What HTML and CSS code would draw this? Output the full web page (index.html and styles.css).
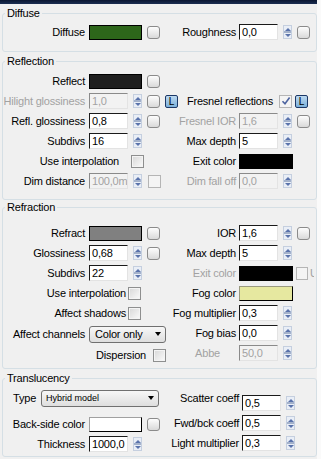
FILE: index.html
```html
<!DOCTYPE html>
<html lang="en">
<head>
    <meta charset="UTF-8">
    <title>Material parameters</title>
    <link rel="stylesheet" href="styles.css">
</head>
<body>
    <div class="panel">
        <div class="titlebar"></div>

        <fieldset class="group diffuse">
            <legend>Diffuse</legend>
            <div class="cols">
                <div class="col left">
                    <div class="row">
                        <span class="lbl">Diffuse</span>
                        <span class="swatch green"></span>
                        <span class="map"></span>
                    </div>
                </div>
                <div class="col right">
                    <div class="row">
                        <span class="lbl">Roughness</span>
                        <span class="num">0,0</span>
                        <span class="spin"></span>
                        <span class="map"></span>
                    </div>
                </div>
            </div>
        </fieldset>

        <fieldset class="group reflection">
            <legend>Reflection</legend>
            <div class="cols">
                <div class="col left">
                    <div class="row">
                        <span class="lbl">Reflect</span>
                        <span class="swatch dark"></span>
                        <span class="map"></span>
                    </div>
                    <div class="row">
                        <span class="lbl off">Hilight glossiness</span>
                        <span class="num off">1,0</span>
                        <span class="spin"></span>
                        <span class="map"></span>
                        <span class="lbtn">L</span>
                    </div>
                    <div class="row">
                        <span class="lbl">Refl. glossiness</span>
                        <span class="num">0,8</span>
                        <span class="spin"></span>
                        <span class="map"></span>
                    </div>
                    <div class="row">
                        <span class="lbl">Subdivs</span>
                        <span class="num">16</span>
                        <span class="spin"></span>
                    </div>
                    <div class="row">
                        <span class="lbl wide-a">Use interpolation</span>
                        <span class="cb"></span>
                    </div>
                    <div class="row">
                        <span class="lbl">Dim distance</span>
                        <span class="num off">100,0m</span>
                        <span class="spin"></span>
                        <span class="cb off gap"></span>
                    </div>
                </div>
                <div class="col right">
                    <div class="row"></div>
                    <div class="row end">
                        <span class="lbl auto">Fresnel reflections</span>
                        <span class="cb off checked">
                            <svg width="10" height="10" viewBox="0 0 10 10"><path d="M1.5 5.2 L4 7.8 L8.6 1.6" fill="none" stroke="#4d64a0" stroke-width="1.6"/></svg>
                        </span>
                        <span class="lbtn">L</span>
                    </div>
                    <div class="row">
                        <span class="lbl off">Fresnel IOR</span>
                        <span class="num off">1,6</span>
                        <span class="spin"></span>
                        <span class="map"></span>
                    </div>
                    <div class="row">
                        <span class="lbl">Max depth</span>
                        <span class="num">5</span>
                        <span class="spin"></span>
                    </div>
                    <div class="row">
                        <span class="lbl">Exit color</span>
                        <span class="swatch black"></span>
                    </div>
                    <div class="row">
                        <span class="lbl off">Dim fall off</span>
                        <span class="num off">0,0</span>
                        <span class="spin"></span>
                    </div>
                </div>
            </div>
        </fieldset>

        <fieldset class="group refraction">
            <legend>Refraction</legend>
            <div class="cols">
                <div class="col left">
                    <div class="row">
                        <span class="lbl">Refract</span>
                        <span class="swatch gray"></span>
                        <span class="map"></span>
                    </div>
                    <div class="row">
                        <span class="lbl">Glossiness</span>
                        <span class="num">0,68</span>
                        <span class="spin"></span>
                        <span class="map"></span>
                    </div>
                    <div class="row">
                        <span class="lbl">Subdivs</span>
                        <span class="num">22</span>
                        <span class="spin"></span>
                    </div>
                    <div class="row">
                        <span class="lbl wide-b">Use interpolation</span>
                        <span class="cb"></span>
                    </div>
                    <div class="row">
                        <span class="lbl wide-b">Affect shadows</span>
                        <span class="cb"></span>
                    </div>
                    <div class="row tall">
                        <span class="lbl">Affect channels</span>
                        <span class="select channels">Color only<i class="arrow"></i></span>
                    </div>
                    <div class="row">
                        <span class="lbl wide-c">Dispersion</span>
                        <span class="cb"></span>
                    </div>
                </div>
                <div class="col right">
                    <div class="row">
                        <span class="lbl">IOR</span>
                        <span class="num">1,6</span>
                        <span class="spin"></span>
                        <span class="map"></span>
                    </div>
                    <div class="row">
                        <span class="lbl">Max depth</span>
                        <span class="num">5</span>
                        <span class="spin"></span>
                    </div>
                    <div class="row">
                        <span class="lbl off">Exit color</span>
                        <span class="swatch black"></span>
                        <span class="cb off near"></span>
                        <span class="cut">Use</span>
                    </div>
                    <div class="row">
                        <span class="lbl">Fog color</span>
                        <span class="swatch fog"></span>
                    </div>
                    <div class="row">
                        <span class="lbl">Fog multiplier</span>
                        <span class="num">0,3</span>
                        <span class="spin"></span>
                    </div>
                    <div class="row">
                        <span class="lbl">Fog bias</span>
                        <span class="num">0,0</span>
                        <span class="spin"></span>
                    </div>
                    <div class="row">
                        <span class="lbl off abbe">Abbe</span>
                        <span class="num off">50,0</span>
                        <span class="spin"></span>
                    </div>
                </div>
            </div>
        </fieldset>

        <fieldset class="group translucency">
            <legend>Translucency</legend>
            <div class="cols">
                <div class="col left">
                    <div class="row type-row">
                        <span class="lbl auto type">Type</span>
                        <span class="select hybrid">Hybrid model<i class="arrow"></i></span>
                    </div>
                    <div class="row">
                        <span class="lbl">Back-side color</span>
                        <span class="swatch white"></span>
                        <span class="map"></span>
                    </div>
                    <div class="row">
                        <span class="lbl">Thickness</span>
                        <span class="num">1000,0</span>
                        <span class="spin"></span>
                    </div>
                </div>
                <div class="col right">
                    <div class="row">
                        <span class="lbl long raised">Scatter coeff</span>
                        <span class="num">0,5</span>
                        <span class="spin"></span>
                    </div>
                    <div class="row">
                        <span class="lbl long">Fwd/bck coeff</span>
                        <span class="num">0,5</span>
                        <span class="spin"></span>
                    </div>
                    <div class="row">
                        <span class="lbl long">Light multiplier</span>
                        <span class="num">0,3</span>
                        <span class="spin"></span>
                    </div>
                </div>
            </div>
        </fieldset>
    </div>
</body>
</html>
```

FILE: styles.css
```css
body {
    margin: 0;
    background-color: #fafafa;
    font-family: "Liberation Sans", Arial, sans-serif;
    font-size: 11px;
    letter-spacing: -0.2px;
    color: #000;
}

.panel {
    width: 317px;
    height: 459px;
    overflow: hidden;
    background-color: #f0f0f0;
}

.titlebar {
    height: 4px;
    background: linear-gradient(#0a1631, #1b2e52);
}

/* group boxes */
.group {
    margin: 3px 0 0 2px;
    width: 315px;
    box-sizing: border-box;
    padding: 0;
    min-width: 0;
    border: 1px solid #d5dfe5;
    border-radius: 3px;
}

.group legend {
    margin-left: 2px;
    padding: 0 2px;
    line-height: 13px;
}

.diffuse .cols { padding: 2px 0 9px; }
.reflection .cols { padding: 3px 0 8px; }
.refraction { margin-top: 1px; }
.refraction .cols { padding: 9px 0 3px; }
.translucency .cols { padding: 1px 0 2px; }
.translucency .right { padding-top: 7px; }

.cols {
    display: flex;
}

.col {
    display: flex;
    flex-direction: column;
}

.left {
    width: 160px;
}

.right {
    width: 152px;
    overflow: hidden;
}

.row {
    display: flex;
    align-items: center;
    height: 20px;
    white-space: nowrap;
}

.row > * {
    flex-shrink: 0;
}

.row.tall {
    height: 22px;
}

.row.end {
    justify-content: flex-end;
    padding-right: 7px;
}

.type-row {
    height: 24px;
    margin-bottom: 4px;
}

/* labels */
.lbl {
    text-align: right;
}

.left .lbl {
    width: 82px;
    margin-right: 4px;
}

.right .lbl {
    width: 73px;
    margin-right: 3px;
}

.left .lbl.wide-a {
    width: 116px;
    margin-right: 12px;
}

.left .lbl.wide-b {
    width: 123px;
    margin-right: 2px;
}

.left .lbl.wide-c {
    width: 143px;
    margin-right: 7px;
}

.lbl.auto {
    width: auto !important;
}

.right .lbl.long {
    width: 76px;
}

.right .lbl.abbe {
    width: 57px;
    padding-right: 16px;
}

.lbl.raised {
    align-self: flex-start;
    margin-top: -1px;
}

.lbl.type {
    margin: 0 5px 0 10px;
}

.off {
    color: #a2a2a2;
}

/* numeric fields */
.num {
    width: 39px;
    height: 16px;
    box-sizing: border-box;
    padding-left: 2px;
    line-height: 14px;
    overflow: hidden;
    background-color: #fff;
    border: 1px solid;
    border-color: #1a1a1a #e3e3e3 #e3e3e3 #1a1a1a;
}

.num.off {
    background-color: #f2f2f2;
    border-color: #8a8a8a #e3e3e3 #e3e3e3 #8a8a8a;
}

.spin {
    display: flex;
    flex-direction: column;
    justify-content: space-around;
    align-items: center;
    width: 9px;
    height: 14px;
    margin-left: 5px;
    box-sizing: border-box;
    border: 1px solid #c5cfdf;
    background: linear-gradient(#e9eef6 0 45%, #a3b1cb 45% 55%, #e9eef6 55%);
}

.spin::before,
.spin::after {
    content: "";
    border-left: 3px solid transparent;
    border-right: 3px solid transparent;
}

.spin::before {
    border-bottom: 3px solid #5a73ab;
}

.spin::after {
    border-top: 3px solid #5a73ab;
}

/* color swatches */
.swatch {
    width: 53px;
    height: 15px;
    box-sizing: border-box;
    border: 1px solid #000;
}

.right .swatch {
    width: 54px;
}

.green { background-color: #2d661a; }
.dark { background-color: #1f1f1f; }
.gray { background-color: #808080; }
.black { background-color: #000; }
.fog {
    background-color: #e6e8a0;
    border-color: #9a9a80 #000 #000 #9a9a80;
}
.white {
    background-color: #fff;
    border-color: #a0a0a0 #000 #000 #a0a0a0;
}

/* small buttons */
.map {
    width: 13px;
    height: 13px;
    margin-left: 5px;
    box-sizing: border-box;
    border: 1px solid #8b8b8b;
    border-radius: 3px;
    background: linear-gradient(#fdfdfd, #d9d9d9);
}

.lbtn {
    width: 13px;
    height: 13px;
    margin-left: 5px;
    box-sizing: border-box;
    border: 1px solid #1c3867;
    border-radius: 2px;
    background: linear-gradient(#bcd9f0, #7cb0da);
    font-size: 10px;
    line-height: 11px;
    text-align: center;
    letter-spacing: 0;
}

.cb {
    display: flex;
    align-items: center;
    justify-content: center;
    width: 13px;
    height: 13px;
    box-sizing: border-box;
    border: 1px solid #8e8f8f;
    background: linear-gradient(135deg, #d7d7d7, #fbfbfb);
    box-shadow: inset 0 0 0 1px #f4f4f4;
}

.cb.off {
    border-color: #b5b5b5;
    background: #f4f4f4;
}

.cb.checked {
    margin-left: 3px;
}

.right .row.end .lbtn {
    margin-left: 3px;
}

.cb.gap {
    margin-left: 6px;
}

.cb.near {
    width: 12px;
    margin-left: 3px;
}

/* the "Use" caption runs past the group edge, only its first letter shows */
.cut {
    width: 4px;
    margin-left: 2px;
    overflow: hidden;
    color: #a2a2a2;
}

/* dropdowns */
.select {
    display: flex;
    align-items: center;
    justify-content: space-between;
    height: 17px;
    box-sizing: border-box;
    padding: 0 4px 0 4px;
    border: 1px solid #707070;
    border-radius: 3px;
    background: linear-gradient(#f7f7f7, #dedede);
}

.channels {
    width: 77px;
    padding-left: 5px;
}

.hybrid {
    width: 118px;
    font-size: 9px;
    letter-spacing: 0;
}

.arrow {
    border-left: 3.5px solid transparent;
    border-right: 3.5px solid transparent;
    border-top: 4px solid #000;
}
```
